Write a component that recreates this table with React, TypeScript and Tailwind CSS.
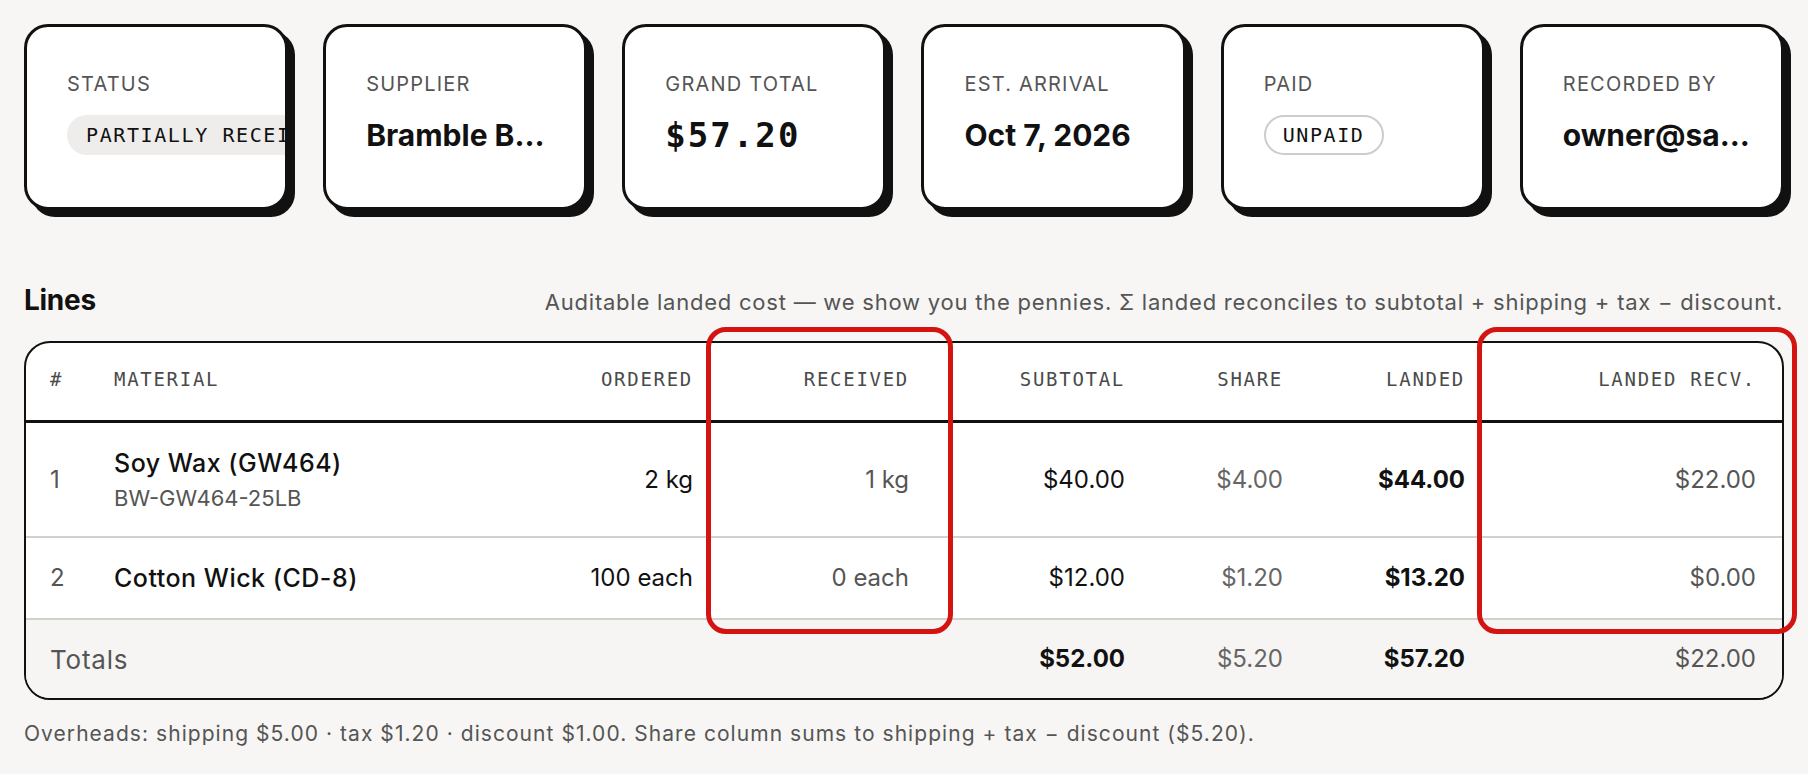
import React from "react";

const sans = "font-['Inter','Noto_Sans',sans-serif]";
const mono = "font-['DejaVu_Sans_Mono','Liberation_Mono',monospace]";

function Card({ label, children }: { label: string; children: React.ReactNode }) {
  return (
    <div className="h-[186px] min-w-0 overflow-hidden rounded-[24px] border-[3px] border-[#111] bg-white pl-10 pr-[30px] pt-[43px] shadow-[7px_7px_0_#111]">
      <div className={`${sans} text-[20px] leading-[28px] tracking-[0.06em] text-[#555] uppercase whitespace-nowrap`}>{label}</div>
      <div className="mt-[17px] flex h-[40px] items-center">{children}</div>
    </div>
  );
}

function Value({ children, monoFont }: { children: React.ReactNode; monoFont?: boolean }) {
  return (
    <div
      className={
        monoFont
          ? `${mono} text-[34px] leading-[40px] font-bold tracking-[0.06em] text-[#111] whitespace-nowrap`
          : `${sans} min-w-0 truncate text-[30px] leading-[36px] font-bold text-[#111]`
      }
    >
      {children}
    </div>
  );
}

const cols = "grid grid-cols-[64px_429px_150px_216px_216px_158px_182px_1fr] pl-6 pr-[26px] items-center";

type Row = {
  n: string;
  name: string;
  sku?: string;
  ordered: string;
  received: string;
  subtotal: string;
  share: string;
  landed: string;
  recv: string;
};

const rows: Row[] = [
  { n: "1", name: "Soy Wax (GW464)", sku: "BW-GW464-25LB", ordered: "2 kg", received: "1 kg", subtotal: "$40.00", share: "$4.00", landed: "$44.00", recv: "$22.00" },
  { n: "2", name: "Cotton Wick (CD-8)", ordered: "100 each", received: "0 each", subtotal: "$12.00", share: "$1.20", landed: "$13.20", recv: "$0.00" },
];

export default function App() {
  const th = `${mono} text-[19px] leading-[24px] tracking-[0.09em] text-[#4a4a4a] uppercase`;
  return (
    <div className={`relative min-h-[774px] bg-[#f7f6f4] px-6 pt-6 ${sans}`}>
      <div className="grid grid-cols-6 gap-[35px]">
        <Card label="Status">
          <div className={`${mono} shrink-0 whitespace-nowrap rounded-full bg-[#eeedeb] px-[19px] text-[20px] leading-[40px] tracking-[0.08em] text-[#111]`}>
            PARTIALLY RECEIVED
          </div>
        </Card>
        <Card label="Supplier">
          <Value>Bramble Berry</Value>
        </Card>
        <Card label="Grand total">
          <Value monoFont>$57.20</Value>
        </Card>
        <Card label="Est. arrival">
          <Value>Oct 7, 2026</Value>
        </Card>
        <Card label="Paid">
          <div className={`${mono} whitespace-nowrap rounded-full border-2 border-[#cfcdca] bg-white px-[17px] text-[20px] leading-[36px] tracking-[0.08em] text-[#111]`}>
            UNPAID
          </div>
        </Card>
        <Card label="Recorded by">
          <Value>owner@sample.co</Value>
        </Card>
      </div>

      <div className="mt-[72px] flex items-baseline justify-between">
        <h2 className="text-[28px] leading-[36px] font-bold tracking-[-0.01em] text-[#111]">Lines</h2>
        <p className="pr-[1px] text-[22px] leading-[30px] tracking-[0.035em] text-[#555]">
          Auditable landed cost — we show you the pennies. Σ landed reconciles to subtotal + shipping + tax − discount.
        </p>
      </div>

      <div className="mt-[23px] overflow-hidden rounded-[26px] border-2 border-[#111] bg-white">
        <div className={`${cols} h-[80px] border-b-[3px] border-[#111] pb-[6px]`}>
          <div className={th}>#</div>
          <div className={th}>Material</div>
          <div className={`${th} text-right`}>Ordered</div>
          <div className={`${th} text-right`}>Received</div>
          <div className={`${th} text-right`}>Subtotal</div>
          <div className={`${th} text-right`}>Share</div>
          <div className={`${th} text-right`}>Landed</div>
          <div className={`${th} text-right`}>Landed recv.</div>
        </div>
        {rows.map((r) => (
          <div
            key={r.n}
            className={`${cols} border-b-2 border-[#d3d1ce] text-[24px] ${r.sku ? "h-[115px]" : "h-[82px]"}`}
          >
            <div className="text-[#555]">{r.n}</div>
            <div className="flex flex-col">
              <span className="text-[25px] font-medium leading-[32px] tracking-[0.02em] text-[#111]">{r.name}</span>
              {r.sku && <span className="mt-[5px] text-[22px] leading-[28px] text-[#555]">{r.sku}</span>}
            </div>
            <div className="text-right text-[#111]">{r.ordered}</div>
            <div className="text-right text-[#555]">{r.received}</div>
            <div className="text-right text-[#111]">{r.subtotal}</div>
            <div className="text-right text-[#666]">{r.share}</div>
            <div className="text-right font-bold text-[#111]">{r.landed}</div>
            <div className="text-right text-[#555]">{r.recv}</div>
          </div>
        ))}
        <div className={`${cols} h-[78px] bg-[#f6f5f3] text-[24px]`}>
          <div className="col-span-4 text-[26px] tracking-[0.03em] text-[#555]">Totals</div>
          <div className="text-right font-bold text-[#111]">$52.00</div>
          <div className="text-right text-[#666]">$5.20</div>
          <div className="text-right font-bold text-[#111]">$57.20</div>
          <div className="text-right text-[#555]">$22.00</div>
        </div>
      </div>

      <p className="mt-[20px] text-[21px] leading-[28px] tracking-[0.05em] text-[#555]">
        Overheads: shipping $5.00 · tax $1.20 · discount $1.00. Share column sums to shipping + tax − discount ($5.20).
      </p>

      <div className="pointer-events-none absolute left-[706px] top-[327px] h-[307px] w-[247px] rounded-[20px] border-[5px] border-[#d41410]" />
      <div className="pointer-events-none absolute left-[1477px] top-[327px] h-[307px] w-[320px] rounded-[20px] border-[5px] border-[#d41410]" />
    </div>
  );
}
